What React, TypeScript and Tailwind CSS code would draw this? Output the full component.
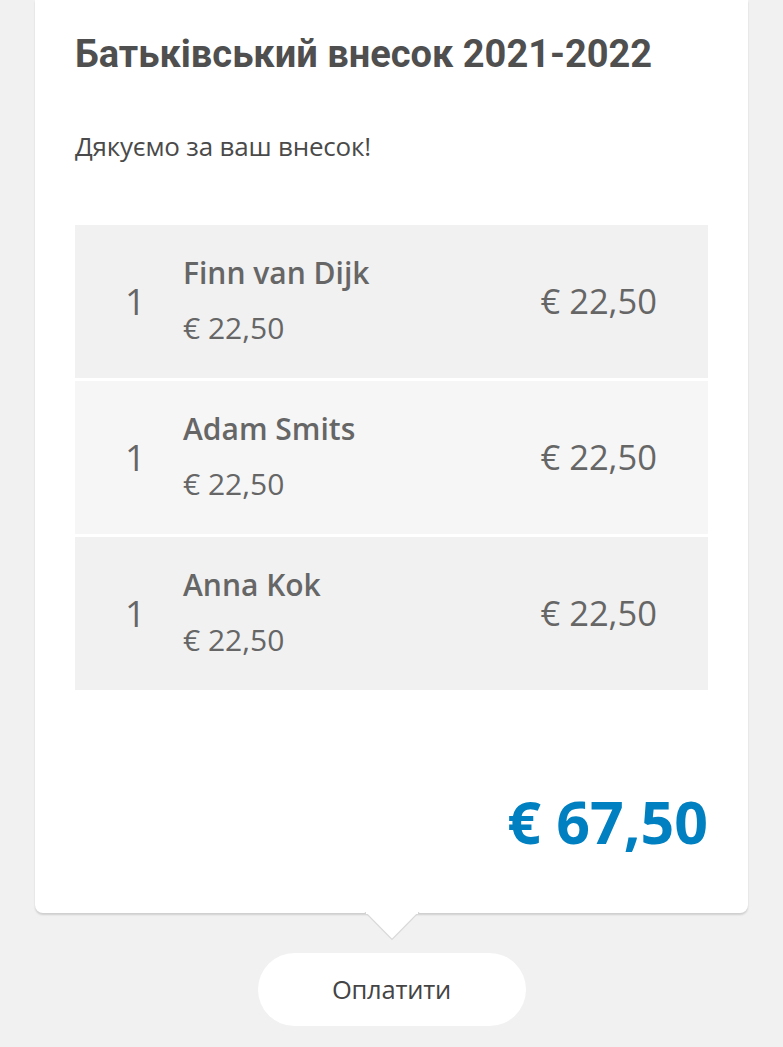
import React from "react";

const rows = [
  { name: "Finn van Dijk", bg: "bg-[#f1f1f1]" },
  { name: "Adam Smits", bg: "bg-[#f6f6f6]" },
  { name: "Anna Kok", bg: "bg-[#f1f1f1]" },
];

export default function App() {
  return (
    <div className="min-h-[1047px] bg-[#f1f1f1] flex flex-col items-center font-['Open_Sans',sans-serif]">
      <div className="relative w-[713px] bg-white rounded-b-lg shadow-[0_2px_2px_rgba(0,0,0,0.14)] px-[40px] pt-[28px] pb-[52px]">
        <h1 className="font-['Roboto',sans-serif] font-bold text-[38px] leading-[52px] text-[#4f4f4f]">
          Батьківський внесок 2021-2022
        </h1>
        <p className="mt-[48px] text-[26px] leading-[36px] tracking-[-0.2px] text-[#4a4a4a]">
          Дякуємо за ваш внесок!
        </p>
        <div className="mt-[61px] flex flex-col gap-[3px]">
          {rows.map((r) => (
            <div key={r.name} className={`${r.bg} h-[153px] flex items-center text-[#666666]`}>
              <div className="w-[108px] pl-[50px] text-[36px] leading-none">1</div>
              <div className="flex-1 flex flex-col">
                <div className="text-[30px] font-semibold leading-[40px]">{r.name}</div>
                <div className="text-[30px] leading-[44px] mt-[13px]">€ 22,50</div>
              </div>
              <div className="pr-[51px] text-[34.5px] leading-none">€ 22,50</div>
            </div>
          ))}
        </div>
        <div className="mt-[91px] text-right font-bold text-[59px] leading-[80px] text-[#0080c0]">
          € 67,50
        </div>
        <svg
          className="absolute left-1/2 -translate-x-1/2 top-full -mt-[1px]"
          width="56"
          height="29"
          viewBox="0 0 56 29"
        >
          <path d="M1 0 L28 27.5 L55 0 Z" fill="#ffffff" />
          <path d="M1 0 L28 27.5 L55 0" fill="none" stroke="#d9d9d9" strokeWidth="1.2" />
          <rect x="2" y="0" width="52" height="2" fill="#ffffff" />
        </svg>
      </div>
      <button className="mt-[40px] w-[268px] h-[73px] rounded-full bg-white text-[25.5px] tracking-[-0.2px] text-[#444444]">
        Оплатити
      </button>
    </div>
  );
}
